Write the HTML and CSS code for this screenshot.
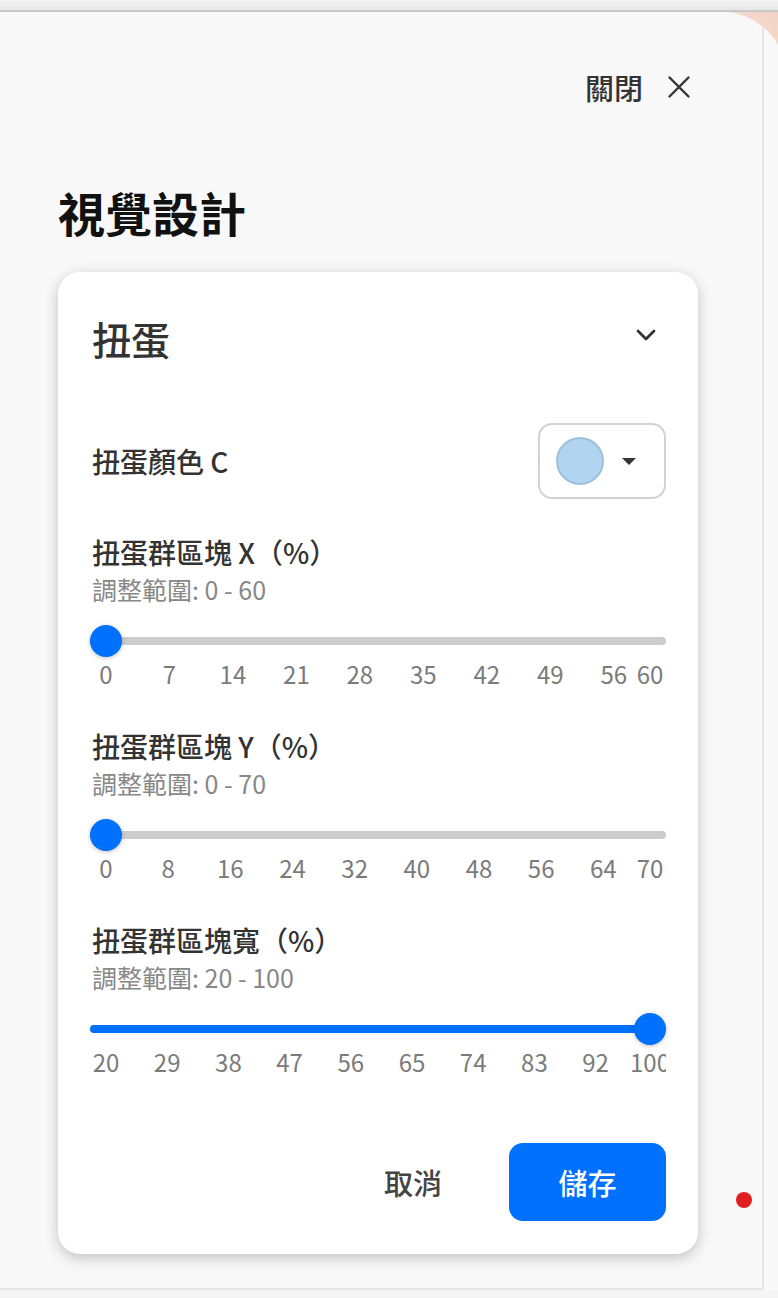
FILE: index.html
```html
<!DOCTYPE html>
<html lang="zh-Hant">
<head>
  <meta charset="UTF-8" />
  <meta name="viewport" content="width=device-width, initial-scale=1.0"/>
  <title>視覺設計</title>
  <link rel="stylesheet" href="styles.css">
</head>
<body>
  <div class="topbar"></div>

  <div class="stage">
    <div class="sheet">
      <div class="inner">
        <div class="close-row">
          <span>關閉</span>
          <svg class="close-icon" width="24" height="24" viewBox="0 0 24 24">
            <path d="M2.5 2.5 L21.5 21.5 M21.5 2.5 L2.5 21.5" stroke="#333" stroke-width="2.4" stroke-linecap="round" fill="none"/>
          </svg>
        </div>

        <h1 class="title">視覺設計</h1>

        <div class="card">
          <div class="card-head">
            <span>扭蛋</span>
            <svg class="chevron" width="20" height="12" viewBox="0 0 20 12">
              <path d="M2 2 L10 10 L18 2" stroke="#333" stroke-width="2.8" stroke-linecap="round" stroke-linejoin="round" fill="none"/>
            </svg>
          </div>

          <div class="field-row">
            <span>扭蛋顏色 C</span>
            <div class="swatch-btn">
              <span class="swatch"></span>
              <span class="caret"></span>
            </div>
          </div>

          <div id="sliders"></div>

          <div class="actions">
            <button class="btn btn-cancel">取消</button>
            <button class="btn btn-save">儲存</button>
          </div>
        </div>

        <span class="dot"></span>
      </div>
    </div>
  </div>

  <script>
    const sliders = [
      { label: '扭蛋群區塊 X（%）', min: 0, max: 60, step: 7, value: 0 },
      { label: '扭蛋群區塊 Y（%）', min: 0, max: 70, step: 8, value: 0 },
      { label: '扭蛋群區塊寬（%）', min: 20, max: 100, step: 9, value: 100 }
    ];

    // thumb is 32px wide, so positions run from 16px to (100% - 16px)
    const pos = p => `calc(16px + ${p} * (100% - 32px))`;

    const box = document.getElementById('sliders');
    sliders.forEach(s => {
      const block = document.createElement('div');
      block.className = 'slider-block';

      const p = (s.value - s.min) / (s.max - s.min);
      let ticks = [];
      for (let v = s.min; v < s.max; v += s.step) ticks.push(v);
      ticks.push(s.max);

      block.innerHTML = `
        <div class="slider-label">${s.label}</div>
        <div class="slider-range">調整範圍: ${s.min} - ${s.max}</div>
        <div class="slider">
          <div class="track"><div class="fill" style="width: ${pos(p)}"></div></div>
          <div class="thumb" style="left: calc(${p} * (100% - 32px))"></div>
        </div>
        <div class="ticks">
          ${ticks.map(v => `<span style="left: ${pos((v - s.min) / (s.max - s.min))}">${v}</span>`).join('')}
        </div>`;
      box.appendChild(block);
    });
  </script>
</body>
</html>
```

FILE: styles.css
```css
* {
  box-sizing: border-box;
}
html, body {
  margin: 0;
  padding: 0;
}
body {
  width: 778px;
  height: 1298px;
  overflow: hidden;
  background: #f5f5f5;
  font-family: "Noto Sans CJK TC", "Noto Sans", sans-serif;
  color: #333;
}
.topbar {
  height: 12px;
  background: linear-gradient(#f4f4f4, #e7e7e7);
  border-bottom: 2px solid #c9c9c9;
}
.stage {
  background: linear-gradient(225deg, #f3d2c4 0, #f7e2d9 70px, #f5f5f5 160px);
}
.sheet {
  margin-right: -8px;
  background: #f8f8f8;
  border-top-right-radius: 64px;
  overflow: hidden;
}
.inner {
  position: relative;
  width: 764px;
  height: 1278px;
  padding: 55px 64px 0 58px;
  border-right: 2px solid #e6e6e6;
  border-bottom: 2px solid #e6e6e6;
}
.close-row {
  display: flex;
  justify-content: flex-end;
  align-items: center;
  gap: 24px;
  height: 40px;
  margin-right: 7px;
  font-size: 29px;
  font-weight: 500;
  color: #333;
}
.title {
  margin: 78px 0 33px;
  font-size: 47px;
  line-height: 54px;
  font-weight: 700;
  color: #111;
}
.card {
  background: #fff;
  border-radius: 22px;
  box-shadow: 0 4px 14px rgba(0, 0, 0, 0.22);
  padding: 44px 32px 33px 32px;
}
.card-head {
  display: flex;
  justify-content: space-between;
  align-items: center;
  height: 44px;
  font-size: 39px;
  line-height: 44px;
  font-weight: 500;
  padding-left: 2px;
}
.chevron {
  margin-right: 10px;
  margin-top: -6px;
}
.field-row {
  display: flex;
  justify-content: space-between;
  align-items: center;
  margin-top: 63px;
  font-size: 28px;
  font-weight: 500;
  padding-left: 2px;
}
.swatch-btn {
  width: 128px;
  height: 76px;
  border: 2px solid #d2d2d2;
  border-radius: 14px;
  display: flex;
  align-items: center;
  justify-content: space-between;
  padding: 0 28px 0 16px;
}
.swatch {
  width: 48px;
  height: 48px;
  border-radius: 50%;
  background: #b1d5f0;
  border: 2px solid #9dc0dc;
}
.caret {
  width: 0;
  height: 0;
  border-left: 7px solid transparent;
  border-right: 7px solid transparent;
  border-top: 7px solid #333;
}
.slider-block {
  margin-top: 36px;
}
.slider-block + .slider-block {
  margin-top: 37px;
}
.slider-label {
  font-size: 28px;
  line-height: 34px;
  font-weight: 500;
  padding-left: 2px;
}
.slider-range {
  margin-top: 5px;
  font-size: 25px;
  line-height: 30px;
  color: #888;
  padding-left: 2px;
}
.slider {
  position: relative;
  height: 32px;
  margin-top: 21px;
}
.track {
  position: absolute;
  left: 0;
  right: 0;
  top: 12px;
  height: 8px;
  border-radius: 4px;
  background: #cccccc;
}
.fill {
  height: 100%;
  border-radius: 4px;
  background: #0070ff;
}
.thumb {
  position: absolute;
  top: 0;
  width: 32px;
  height: 32px;
  border-radius: 50%;
  background: #0070ff;
  box-shadow: 0 1px 4px rgba(0, 0, 0, 0.25);
}
/* tall enough for the font's full line box, so clipping only trims the sides */
.ticks {
  position: relative;
  height: 36px;
  margin-top: -1px;
  overflow: hidden;
  font-size: 24px;
  line-height: 36px;
  color: #7b7b7b;
}
.ticks span {
  position: absolute;
  top: 0;
  transform: translateX(-50%);
  white-space: nowrap;
}
.actions {
  display: flex;
  justify-content: flex-end;
  gap: 40px;
  margin-top: 63px;
}
.btn {
  height: 78px;
  border: none;
  border-radius: 14px;
  font-family: inherit;
  font-size: 29px;
  font-weight: 500;
  cursor: pointer;
}
.btn-cancel {
  width: 112px;
  background: transparent;
  color: #444;
}
.btn-save {
  width: 157px;
  background: #0070ff;
  color: #fff;
}
.dot {
  position: absolute;
  left: 736px;
  top: 1180px;
  width: 16px;
  height: 16px;
  border-radius: 50%;
  background: #e02020;
}
```
